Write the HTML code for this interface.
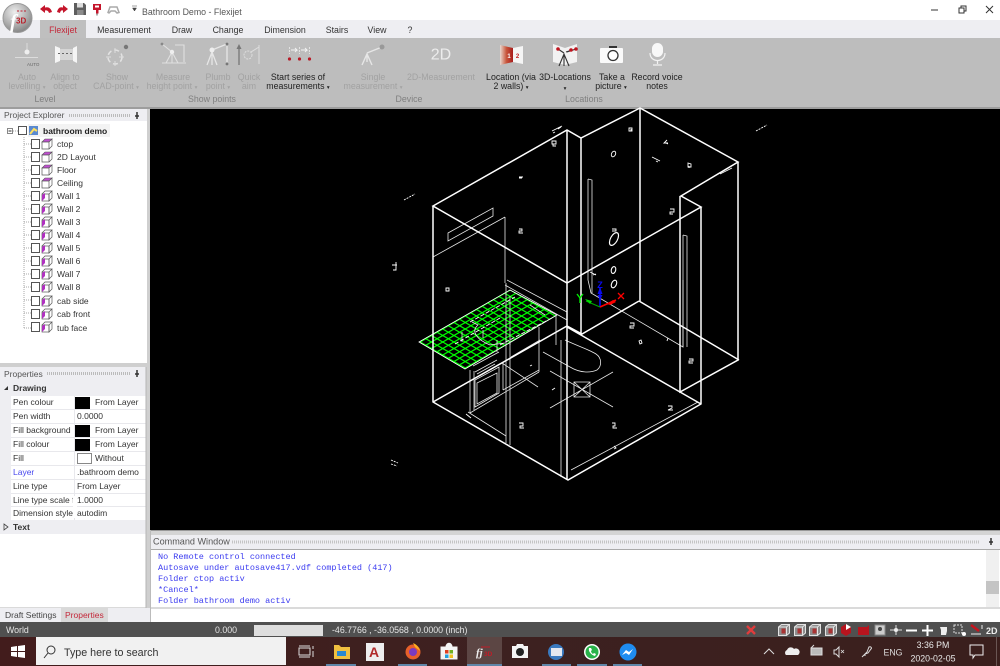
<!DOCTYPE html>
<html><head><meta charset="utf-8"><title>Bathroom Demo - Flexijet</title>
<style>
html,body{margin:0;padding:0;background:#fff;width:1000px;height:666px;overflow:hidden}
svg{display:block;font-family:"Liberation Sans",sans-serif;font-size:8.8px}
.t{fill:#333;font-size:8.5px}
.d{fill:#a2a2a2;text-anchor:middle}
.a{fill:#222;text-anchor:middle}
.g{fill:#808080;text-anchor:middle}
.m{font-family:"Liberation Mono",monospace;font-size:8.5px;fill:#3c3cf0}
.s{fill:#e6e6e6}
.w{stroke:#fff;stroke-width:1.5;fill:none}
.n{stroke:#e8e8e8;stroke-width:.8;fill:none}
.k{stroke:#fff;stroke-width:.8;fill:none}
tspan.c{font-size:5.5px}
</style></head><body>
<svg width="1000" height="666" viewBox="0 0 1000 666" xmlns="http://www.w3.org/2000/svg">
<defs>
<radialGradient id="lg" cx=".4" cy=".3" r=".8"><stop offset="0" stop-color="#eee"/><stop offset=".6" stop-color="#a9a9a9"/><stop offset="1" stop-color="#777"/></radialGradient>
<linearGradient id="tb" x1="0" x2="1" y1="0" y2="0"><stop offset="0" stop-color="#421c1c"/><stop offset=".5" stop-color="#3d2120"/><stop offset="1" stop-color="#3a1f1d"/></linearGradient>
<linearGradient id="rd" x1="0" x2="1" y1="0" y2="0"><stop offset="0" stop-color="#e8d8d0"/><stop offset=".5" stop-color="#c8553a"/><stop offset="1" stop-color="#a81c1c"/></linearGradient>
<pattern id="gr" width="6.500" height="6.500" patternUnits="userSpaceOnUse" patternTransform="matrix(.866 .5 .866 -.5 419 342)">
<rect width="6.500" height="6.500" fill="#000"/><path d="M0 .7H6.500M.7 0V6.500" stroke="#00ff00" stroke-width="1.400"/></pattern>
<g id="wi"><rect x="0" y="3" width="7" height="7" fill="#fff" stroke="#555" stroke-width=".7"/><path d="M0 3L3 0H10L7 3V10L10 7V0" fill="none" stroke="#555" stroke-width=".7"/><path d="M0 10L3 7V2L0 4Z" fill="#b030c0"/></g>
<g id="ti"><path d="M0 3L3 0H10L7 3Z" fill="#c050d0" stroke="#555" stroke-width=".6"/><path d="M0 3H7V10H0ZM7 3L10 0V7L7 10" fill="#fff" stroke="#555" stroke-width=".7"/></g>
<g id="cu"><path d="M-5.500 -3L-2.500 -5.500H5.500V3L2.500 5.500H-5.500Z" fill="#8e8e8e"/><path d="M-5.500 -3L-2.500 -5.500H5.500V3L2.500 5.500H-5.500ZM-5.500 -3H2.500V5.500M2.500 -3L5.500 -5.500" fill="none" stroke="#e2e2e2" stroke-width="1"/><rect x="-2.500" y="-1.500" width="4" height="5" fill="#a33"/></g>
</defs>

<!-- title -->
<rect width="1000" height="20" fill="#fff"/>
<rect y="20" width="1000" height="18" fill="#eeeef2"/>
<rect x="40" y="20" width="46" height="18" fill="#bfbfbf"/>
<rect y="38" width="1000" height="69" fill="#bdbdbd"/>
<rect y="107" width="1000" height="2" fill="#9d9d9d"/>

<circle cx="17.500" cy="18" r="14.500" fill="url(#lg)" stroke="#999"/>
<text x="10" y="28" style="font:italic bold 20px 'Liberation Serif',serif" fill="#fff">f</text>
<text x="16" y="23.500" style="font:bold 8px 'Liberation Sans',sans-serif" fill="#b8202a">3D</text>
<path d="M17 11h9" stroke="#c02030" stroke-width="1" stroke-dasharray="2 1.500"/>

<path d="M40 9l5-4v2.500c3-1 6 .5 7 4.500l-3 1c-.5-2-2-3-4-2.500v2.500z" fill="#c4152b"/>
<path d="M68 9l-5-4v2.500c-3-1-5 .5-6 4.500l3 1c.5-2 1-3 3-2.500v2.500z" fill="#c4152b"/>
<path d="M74 3h10l2 2v10H74z" fill="#5e5e5e"/><rect x="77" y="3" width="6" height="4.500" fill="#ddd"/><rect x="77" y="10" width="6.500" height="5" fill="#8c8c8c"/>
<rect x="93" y="4" width="8" height="6" fill="#c4152b"/><rect x="96" y="10" width="2.500" height="3.500" fill="#c4152b"/><path d="M97 13.500v2" stroke="#555"/><rect x="95" y="5.500" width="4" height="2" fill="#fff"/>
<path d="M108 12.500l2-5.500h7l2 5.500-2 .5-2-2h-4l-2 2z" fill="none" stroke="#aaa" stroke-width="1.500"/>
<path d="M132 6h5M132.500 8h4l-2 3z" fill="#444" stroke="#444" stroke-width=".5"/>
<text x="142" y="15" fill="#555">Bathroom Demo -  Flexijet</text>
<path d="M931 10h7" stroke="#333"/>
<path d="M959 8h5v5h-5zM961 8V6h5v5h-2" fill="none" stroke="#333"/>
<path d="M986 6l7 7M993 6l-7 7" stroke="#333"/>

<!-- tabs -->
<g text-anchor="middle" fill="#333">
<text x="63" y="33" fill="#c4283a">Flexijet</text>
<text x="124" y="33">Measurement</text>
<text x="182" y="33">Draw</text>
<text x="228" y="33">Change</text>
<text x="285" y="33">Dimension</text>
<text x="337" y="33">Stairs</text>
<text x="377" y="33">View</text>
<text x="410" y="33">?</text>
</g>

<!-- ribbon labels -->
<text class="d" x="27" y="80">Auto</text><text class="d" x="27" y="89">levelling <tspan class="c">▾</tspan></text>
<text class="d" x="65" y="80">Align to</text><text class="d" x="65" y="89">object</text>
<text class="d" x="117" y="80">Show</text><text class="d" x="116" y="89">CAD-point <tspan class="c">▾</tspan></text>
<text class="d" x="173" y="80">Measure</text><text class="d" x="172" y="89">height point <tspan class="c">▾</tspan></text>
<text class="d" x="218" y="80">Plumb</text><text class="d" x="218" y="89">point <tspan class="c">▾</tspan></text>
<text class="d" x="249" y="80">Quick</text><text class="d" x="249" y="89">aim</text>
<text class="a" x="298" y="80">Start series of</text><text class="a" x="298" y="89">measurements <tspan class="c">▾</tspan></text>
<text class="d" x="373" y="80">Single</text><text class="d" x="373" y="89">measurement <tspan class="c">▾</tspan></text>
<text class="d" x="441" y="80">2D-Measurement</text>
<text class="a" x="511" y="80">Location (via</text><text class="a" x="511" y="89">2 walls) <tspan class="c">▾</tspan></text>
<text class="a" x="565" y="80">3D-Locations</text><text class="a" x="565" y="90" style="font-size:5.500px">▾</text>
<text class="a" x="612" y="80">Take a</text><text class="a" x="611" y="89">picture <tspan class="c">▾</tspan></text>
<text class="a" x="657" y="80">Record voice</text><text class="a" x="657" y="89">notes</text>
<text class="g" x="45" y="102">Level</text><text class="g" x="212" y="102">Show points</text><text class="g" x="409" y="102">Device</text><text class="g" x="584" y="102">Locations</text>

<!-- ribbon icons -->
<path d="M15 57.500h23M27 43v9" stroke="#dcdcdc" stroke-width="1"/><circle cx="27" cy="52" r="2.500" fill="#eee"/>
<text x="27" y="66" style="font-size:4.500px" fill="#666">AUTO</text>
<path d="M55 46l5 2v13l-5 2zM77 46l-4 2v13l4 2z" fill="#f5f5f5"/><rect x="60" y="49" width="13" height="11" fill="#d6d6d6"/><path d="M58 53.500h16" stroke="#666" stroke-dasharray="2 2"/>
<circle cx="115" cy="57" r="7" fill="none" stroke="#e2e2e2" stroke-width="1.500" stroke-dasharray="5 3"/><path d="M106 57h5M119 57h5M115 48v5M115 61v5" stroke="#ddd"/><circle cx="126" cy="47" r="2.200" fill="#777"/>
<path d="M162 44l10 8M162 63h24M172 52l-6 11M172 52l6 11M172 52v11M175 45h9v17" stroke="#e0e0e0" stroke-width="1.100" fill="none"/><circle cx="162" cy="44" r="1.400" fill="#888"/><circle cx="172" cy="52" r="2.200" fill="#eee"/>
<path d="M207 65l5-13 5 13M212 52v13M212 50l15-6M227 46v16" stroke="#e6e6e6" stroke-width="1.300" fill="none"/><circle cx="212" cy="50" r="2.500" fill="#eee"/><circle cx="227" cy="44" r="1.400" fill="#777"/><circle cx="227" cy="64" r="1.400" fill="#777"/>
<path d="M239 65V46" stroke="#777" stroke-width="1.300"/><path d="M236.500 49l2.500-5 2.500 5z" fill="#777"/><circle cx="248" cy="55" r="4" fill="none" stroke="#ddd" stroke-dasharray="2 1"/><path d="M251 52l8-5M259 45v19" stroke="#ddd"/>
<path d="M289.500 47v7M299.500 47v7M309.500 47v7" stroke="#e2e2e2" stroke-width="1" stroke-dasharray="2 1"/><path d="M291 50h6l-2-2m2 2l-2 2M301 50h6l-2-2m2 2l-2 2" stroke="#f2f2f2" fill="none"/>
<circle cx="289.500" cy="59" r="1.600" fill="#b81c28"/><circle cx="299.500" cy="59" r="1.600" fill="#b81c28"/><circle cx="309.500" cy="59" r="1.600" fill="#b81c28"/>
<path d="M362 65l5-11 5 11M367 54v8M367 53l15-6" stroke="#e6e6e6" stroke-width="1.400" fill="none"/><circle cx="382" cy="47" r="2.500" fill="#999"/>
<text x="441" y="59.500" text-anchor="middle" style="font-size:16px" fill="#ececec">2D</text>
<path d="M500 45l13 3v14l-13 3z" fill="url(#rd)"/><path d="M513 48l10-2v18l-10-2z" fill="#f5f5f5"/>
<text x="509" y="58" style="font-size:6px;font-weight:bold" text-anchor="middle" fill="#fff">1</text><text x="517.500" y="58" style="font-size:6px;font-weight:bold" text-anchor="middle" fill="#c02020">2</text>
<path d="M553 44l12 4 12-4v18l-12 3-12-3z" fill="#f2f2f2"/><path d="M559 66l5-12 5 12M564 54v12M564 53l-6-4M566 52l6-2M567 52l9-3" stroke="#333" stroke-width="1.100" fill="none"/><circle cx="558" cy="49" r="1.800" fill="#c0141e"/><circle cx="571" cy="50" r="1.800" fill="#c0141e"/><circle cx="576" cy="49" r="1.800" fill="#c0141e"/>
<rect x="600" y="48" width="23" height="15" rx="1" fill="#fafafa"/><rect x="609" y="46" width="8" height="2" fill="#333"/><circle cx="613" cy="55.500" r="5" fill="#fff" stroke="#333" stroke-width="1.300"/>
<rect x="652" y="43" width="11" height="14" rx="5.500" fill="#f8f8f8"/><path d="M650 53c0 10 15 10 15 0M657.500 60v4M653 65h9" stroke="#f2f2f2" stroke-width="1.200" fill="none"/>

<!-- left panels -->
<rect y="109" width="150" height="513" fill="#cfcfcf"/>
<rect x="0" y="109" width="147" height="254" fill="#fff"/>
<rect x="0" y="109" width="147" height="12" fill="#eeeef2"/>
<text class="t" x="4" y="118" style="fill:#555">Project Explorer</text>
<path d="M69 115.500H130" stroke="#bbb" stroke-width="3" stroke-dasharray="1 1"/>
<path d="M137 112v4M135 116h4M137 116v3" stroke="#333" stroke-width="1.500"/>

<rect x="28" y="124" width="82" height="13" fill="#f3f3f3"/>
<path d="M24 137V328" stroke="#aaa" stroke-dasharray="1 1"/>
<path d="M24 144h7M24 157h7M24 170h7M24 183h7M24 196h7M24 209h7M24 222h7M24 235h7M24 248h7M24 261h7M24 274h7M24 287h7M24 300h7M24 313h7M24 328h7" stroke="#aaa" stroke-dasharray="1 1"/>
<rect x="7.500" y="128.500" width="5" height="5" fill="#fff" stroke="#888"/><path d="M8.500 131h3" stroke="#333"/><path d="M13 131h5" stroke="#aaa" stroke-dasharray="1 1"/>
<rect x="18.500" y="126.500" width="8" height="8" fill="#fff" stroke="#555"/>
<rect x="29" y="126" width="9" height="9" fill="#5a8ad0"/><path d="M30 134l4-5 3 2" stroke="#ffe060" stroke-width="2" fill="none"/>
<text x="43" y="134" style="font-weight:bold;font-size:8.500px" fill="#222">bathroom demo</text>

<g fill="#fff" stroke="#555">
<rect x="31.500" y="139.500" width="8" height="9"/><rect x="31.500" y="152.500" width="8" height="9"/><rect x="31.500" y="165.500" width="8" height="9"/><rect x="31.500" y="178.500" width="8" height="9"/><rect x="31.500" y="191.500" width="8" height="9"/><rect x="31.500" y="204.500" width="8" height="9"/><rect x="31.500" y="217.500" width="8" height="9"/><rect x="31.500" y="230.500" width="8" height="9"/><rect x="31.500" y="243.500" width="8" height="9"/><rect x="31.500" y="256.500" width="8" height="9"/><rect x="31.500" y="269.500" width="8" height="9"/><rect x="31.500" y="282.500" width="8" height="9"/><rect x="31.500" y="296.500" width="8" height="9"/><rect x="31.500" y="309.500" width="8" height="9"/><rect x="31.500" y="322.500" width="8" height="9"/>
</g>
<use href="#ti" x="42" y="139"/><use href="#ti" x="42" y="152"/><use href="#ti" x="42" y="165"/><use href="#ti" x="42" y="178"/>
<use href="#wi" x="42" y="191"/><use href="#wi" x="42" y="204"/><use href="#wi" x="42" y="217"/><use href="#wi" x="42" y="230"/><use href="#wi" x="42" y="243"/><use href="#wi" x="42" y="256"/><use href="#wi" x="42" y="269"/><use href="#wi" x="42" y="282"/><use href="#wi" x="42" y="296"/><use href="#wi" x="42" y="309"/><use href="#wi" x="42" y="322"/>
<g class="t">
<text x="57" y="147">ctop</text><text x="57" y="160">2D Layout</text><text x="57" y="173">Floor</text><text x="57" y="186">Ceiling</text><text x="57" y="199">Wall 1</text><text x="57" y="212">Wall 2</text><text x="57" y="225">Wall 3</text><text x="57" y="238">Wall 4</text><text x="57" y="251">Wall 5</text><text x="57" y="264">Wall 6</text><text x="57" y="277">Wall 7</text><text x="57" y="290">Wall 8</text><text x="57" y="304">cab side</text><text x="57" y="317">cab front</text><text x="57" y="331">tub face</text>
</g>

<!-- properties -->
<rect x="0" y="367" width="146" height="241" fill="#fff"/>
<rect x="0" y="367" width="146" height="13" fill="#eeeef2"/>
<text class="t" x="4" y="377" style="fill:#555">Properties</text>
<path d="M47 373.500H130" stroke="#bbb" stroke-width="3" stroke-dasharray="1 1"/>
<path d="M137 370v4M135 374h4M137 374v3" stroke="#333" stroke-width="1.500"/>
<rect x="0" y="380" width="146" height="16" fill="#eeeef2"/>
<rect x="0" y="520" width="146" height="14" fill="#eeeef2"/>
<rect x="0" y="396" width="11" height="124" fill="#eeeef2"/>
<path d="M11 409.500H146M11 423.500H146M11 437.500H146M11 451.500H146M11 465.500H146M11 479.500H146M11 493.500H146M11 506.500H146M74.500 396V520" stroke="#e8e8ec"/>
<path d="M4 390l4 0v-4z" fill="#333"/><path d="M4 524l4 3-4 3z" fill="none" stroke="#444" stroke-width=".8"/>
<text x="13" y="391" style="font-weight:bold;font-size:8.500px" fill="#333">Drawing</text>
<text x="13" y="530" style="font-weight:bold;font-size:8.500px" fill="#333">Text</text>
<g class="t"><text x="13" y="405">Pen colour</text><text x="13" y="419">Pen width</text><text x="13" y="433">Fill background</text><text x="13" y="447">Fill colour</text><text x="13" y="461">Fill</text><text x="13" y="475" style="fill:#4848ee">Layer</text><text x="13" y="489">Line type</text><text x="13" y="503">Line type scale f</text><text x="13" y="516">Dimension style</text>
<rect x="73" y="496" width="4" height="22" fill="#fff"/>
<text x="95" y="405">From Layer</text><text x="77" y="419">0.0000</text><text x="95" y="433">From Layer</text><text x="95" y="447">From Layer</text><text x="95" y="461">Without</text><text x="77" y="475">.bathroom demo</text><text x="77" y="489">From Layer</text><text x="77" y="503">1.0000</text><text x="77" y="516">autodim</text></g>
<rect x="75" y="397" width="15" height="12" fill="#000"/><rect x="75" y="425" width="15" height="12" fill="#000"/><rect x="75" y="439" width="15" height="12" fill="#000"/>
<rect x="77.500" y="453.500" width="14" height="10" fill="#fff" stroke="#888"/>
<path d="M0 608H146V367" stroke="#b5b5b5" fill="none"/>
<rect x="0" y="608" width="150" height="14" fill="#eeeef2"/>
<rect x="61" y="608" width="47" height="14" fill="#d9d9d9"/>
<text class="t" x="5" y="618" style="fill:#444">Draft Settings</text><text class="t" x="65" y="618" style="fill:#c4283a">Properties</text>

<!-- CAD canvas -->
<rect x="150" y="109" width="850" height="421" fill="#000"/>
<polygon points="419,342 510,290 557,315 465,369" fill="url(#gr)"/>
<path class="k" d="M419 342L510 290L557 315L465 369Z"/>
<g class="n">
<path d="M448 233L493 208V216L448 241Z"/>
<path d="M505 217L433 257M505 217V283M506 283V443M510 343V445"/>
<path d="M588 179L592 180V293M588 179V280L591 293L683 347V280M680 280V391"/>
<path d="M683 235L687 236V347M683 235V347"/>
<path d="M561 340V477M571 470L698 402"/>
<path d="M543 352L570 367C580 373 590 373 597 370C602 366 602 358 596 354C590 350 580 347 565 340"/>
<path d="M574 382H590V397H574ZM574 382L590 397M590 382L574 397M550 371L613 407M550 408L613 372"/>
<path d="M507 280L567 312M505 285L567 320M556 315L556 345M470 370V413M539 327V372M470 413L539 372M474 371V410M475 380L499 367V393L475 407ZM477 383L497 373V393L477 404Z"/>
<path d="M468 412L506 436M473 366L499 352M477 374L495 364M475 372L497 360M502 363L538 387M503 390L539 370M503 362V390M511 357L540 340"/>
<path d="M510 296V345M472 322L478 325C470 332 478 340 490 345L505 343M483 330V338M462 332V342M497 340V352M530 305L545 315"/>
</g>
<path d="M455 344L500 318M470 322L515 297M500 345L552 318" stroke="#fff" stroke-width=".9" stroke-dasharray="4 2" fill="none"/>
<g class="w">
<path d="M433 206L567 130L581 138L640 108L738 162L681 196L701 207L567 283Z"/>
<path d="M433 206V402L568 480L701 404V207M567 130V480M581 138V334M640 108V301M738 162V360L680 392V196M680 392L701 404"/>
<path d="M639 301L739 360M639 301L582 334L567 326L433 402M567 327L680 392"/>
</g>
<!-- small marks -->
<g stroke="#fff" stroke-width=".9" fill="none">
<path d="M552 131l10-5M553 133l2-1M558 129l3-2"/>
<path d="M552 141h4v3h-4zM553 144v2h3"/><path d="M629 128h3v3h-3zM631 131v-2"/>
<ellipse cx="613.500" cy="154" rx="2" ry="3" transform="rotate(25 613.500 154)"/>
<path d="M667 140l-3 3h4M668 144l-2-1"/><path d="M652 157l8 4M656 161l2 1"/><path d="M688 163l3 1v3h-3zM689 166v2"/>
<path d="M720 174l12-6"/><path d="M756 131l11-6" stroke-dasharray="2 1"/><path d="M404 200l11-6" stroke-dasharray="2 1"/>
<path d="M519 177h4M519 178h3"/><path d="M519 229h3v2h-3v2h4"/><path d="M670 209h4v3h-4v2h3"/>
<ellipse cx="614" cy="239" rx="3.500" ry="7" transform="rotate(28 614 239)" stroke-width="1.200"/><path d="M612 229h4v2h-4"/>
<ellipse cx="613.500" cy="270" rx="2.200" ry="3.500" transform="rotate(15 613.500 270)" stroke-width="1.100"/>
<ellipse cx="614" cy="284" rx="2.400" ry="4" transform="rotate(25 614 284)" stroke-width="1.100"/>
<path d="M396 262v8h-3M392 265h5"/><path d="M590 272l6 3M593 275l3-1"/>
<path d="M446 288h3v3h-3z"/><path d="M630 323h4v3h-4v2h4"/><path d="M639 341l2-1 1 3-2 1z"/>
<path d="M689 359h4v2h-4v2h4"/><path d="M668 406h4v2l-4 2h5"/><path d="M519 423h4v3h-3v2h4"/><path d="M612 423h3v3h-2v2h4"/>
<path d="M391 460l7 3M391 464l6 2" stroke-dasharray="2 1"/><path d="M552 390l3-2M532 365l-2 1M668 338l-1 3"/><path d="M614 446l2 2-2 1"/>
<path d="M466 414l5 4"/>
</g>
<!-- axes -->
<path d="M600 307V288" stroke="#0a0af0" stroke-width="1.600"/><path d="M597.500 294l2.500-7 2.500 7zM597.500 295l2.500 5 2.500-5z" fill="#0a0af0"/>
<text x="600" y="288" text-anchor="middle" style="font-size:9px;font-weight:bold" fill="#0a0af0">Z</text>
<path d="M600 307L616 300" stroke="#f00" stroke-width="1.600"/><path d="M607 304l6-4 3 2-6 3z" fill="#f00"/><path d="M618 293l6 6M624 293l-6 6" stroke="#f00" stroke-width="1.300"/>
<path d="M600 307L586 301" stroke="#0a0" stroke-width="1"/><path d="M585 299l7 2-2 3z" fill="#0d0"/><path d="M577 294l3 4 3-4M580 298v5" stroke="#0e0" stroke-width="1.400" fill="none"/>

<!-- command window -->
<rect x="150" y="530" width="850" height="92" fill="#fff"/>
<rect x="150" y="530" width="850" height="5" fill="#d4d4d4"/><rect x="150" y="530" width="850" height="1" fill="#999"/>
<rect x="150" y="535" width="850" height="14" fill="#eeeef2"/><rect x="150" y="549" width="850" height="1" fill="#aaa"/>
<text x="153" y="544.500" style="font-size:9.100px" fill="#555">Command Window</text>
<path d="M232 542H980" stroke="#c4c4c4" stroke-width="3" stroke-dasharray="1 1"/>
<path d="M991 538v4M989 542h4M991 542v3" stroke="#333" stroke-width="1.500"/>
<text class="m" x="158" y="559">No Remote control connected</text>
<text class="m" x="158" y="570">Autosave under autosave417.vdf completed (417)</text>
<text class="m" x="158" y="581">Folder ctop activ</text>
<text class="m" x="158" y="592">*Cancel*</text>
<text class="m" x="158" y="603">Folder bathroom demo activ</text>
<rect x="986" y="550" width="13" height="57" fill="#f0f0f0"/><rect x="986" y="581" width="13" height="13" fill="#c4c4c4"/>
<path d="M150 608H1000" stroke="#b5b5b5"/>
<path d="M150.500 530V622" stroke="#bbb"/>

<!-- status -->
<rect y="622" width="1000" height="15" fill="#505050"/>
<text class="s" x="6" y="633">World</text>
<text class="s" x="215" y="633">0.000</text>
<rect x="254" y="625" width="69" height="11" fill="#dedede"/>
<text class="s" x="332" y="633">-46.7766 , -36.0568 , 0.0000 (inch)</text>
<path d="M747 626l8 8M755 626l-8 8" stroke="#e03c3c" stroke-width="2.400"/>
<use href="#cu" x="784" y="630"/><use href="#cu" x="800" y="630"/><use href="#cu" x="815" y="630"/><use href="#cu" x="831" y="630"/>
<path d="M841 627l5-3 5 3v6l-5 3-5-3z" fill="#b8141e"/><path d="M846 624l5 3-5 3z" fill="#fff"/>
<path d="M858 627h9l2-2v10h-11z" fill="#b8141e"/>
<rect x="875" y="625" width="10" height="10" fill="#ccc" stroke="#888"/><circle cx="880" cy="629" r="2" fill="#444"/>
<path d="M890 630h4M898 630h4M896 625v3M896 632v3" stroke="#ddd"/><circle cx="896" cy="630" r="2" fill="#eee"/>
<path d="M906 630.500h11" stroke="#fff" stroke-width="2"/><path d="M922 630.500h11M927.500 625v11" stroke="#fff" stroke-width="2"/>
<path d="M941 635v-5l-1-3h7v4l-1 4z" fill="#eee"/>
<path d="M954 625h8v8h-8z" fill="none" stroke="#ddd" stroke-dasharray="2 1"/><circle cx="964" cy="634" r="2" fill="#fff"/>
<path d="M971 625l8 6" stroke="#c8141e" stroke-width="2.400"/><path d="M971 634h10M982 625v4" stroke="#eee"/>
<text x="986" y="634" style="font-size:9px;font-weight:bold" fill="#eee">2D</text>

<!-- taskbar -->
<rect y="637" width="1000" height="29" fill="url(#tb)"/>
<path d="M11 647l6-1v5h-6zM18 646l7-1v6h-7zM11 652h6v5l-6-1zM18 652h7v6l-7-1z" fill="#fff"/>
<rect x="36" y="637" width="250" height="28" fill="#f1f1f1"/>
<circle cx="51" cy="650" r="4" fill="none" stroke="#333"/><path d="M48 653l-4 5" stroke="#333"/>
<text x="64" y="656" style="font-size:10.700px" fill="#333">Type here to search</text>
<path d="M299 648h11v7h-11zM299 646h11M299 657h11M313 646v3M313 651v6" stroke="#ddd" fill="none"/>
<path d="M334 645h5l2 2h9v12h-16z" fill="#f0c040"/><rect x="337" y="651" width="9" height="5" fill="#2a88d0"/>
<rect x="366" y="643" width="18" height="18" fill="#eee"/><text x="374" y="657" text-anchor="middle" style="font-size:14px;font-weight:bold" fill="#b02a2a">A</text>
<circle cx="413" cy="652" r="7.500" fill="#e8602a"/><circle cx="413" cy="652" r="4" fill="#7a3ac0"/><path d="M413 643c3 1 6 4 7 8l-5-4z" fill="#ffb020"/>
<path d="M441 647h16v12h-16zM446 647c0-5 6-5 6 0" fill="#f4f4f4" stroke="#f4f4f4"/><rect x="445" y="650" width="3.500" height="3.500" fill="#e04020"/><rect x="449.500" y="650" width="3.500" height="3.500" fill="#70b020"/><rect x="445" y="654.500" width="3.500" height="3.500" fill="#20a0e0"/><rect x="449.500" y="654.500" width="3.500" height="3.500" fill="#f0c020"/>
<rect x="467" y="637" width="35" height="29" fill="#5c4644"/>
<text x="476" y="656" style="font:italic bold 11px 'Liberation Serif',serif" fill="#eee">fj</text><text x="484" y="656" style="font-size:6.500px;font-weight:bold" fill="#c01c28">3D</text><path d="M481 647h9" stroke="#c01c28"/>
<path d="M512 646h4l1-2h6l1 2h4v12h-16z" fill="#f4f4f4"/><circle cx="520" cy="652" r="4" fill="#222"/>
<circle cx="556" cy="652" r="8" fill="#3a7ac0"/><rect x="551" y="648" width="11" height="8" fill="#e4e8f0"/>
<circle cx="592" cy="652" r="8" fill="#fff"/><circle cx="592" cy="652" r="6.500" fill="#29b34a"/><path d="M589 648c-1 3 2 7 6 8l1-2-2-1-1 1c-1-.5-2-2-2-3l1-1-1-2z" fill="#fff"/>
<circle cx="628" cy="652" r="8.500" fill="#1f8cf0"/><path d="M622 655l4-5 3 2 4-3-4 6-3-2z" fill="#fff"/>
<g fill="#5f86a8"><rect x="326" y="664" width="30" height="2"/><rect x="398" y="664" width="29" height="2"/><rect x="467" y="664" width="35" height="2"/><rect x="542" y="664" width="29" height="2"/><rect x="577" y="664" width="30" height="2"/><rect x="613" y="664" width="29" height="2"/></g>
<!-- tray -->
<path d="M764 654l5-5 5 5" stroke="#ddd" fill="none"/>
<path d="M786 655a3 3 0 0 1 1-5a4 4 0 0 1 7-1a3 3 0 0 1 4 6z" fill="#eee"/>
<rect x="811" y="648" width="11" height="7" fill="#bbb" stroke="#ddd"/><path d="M814 645l-3 3" stroke="#ddd"/>
<path d="M834 650h2l3-3v10l-3-3h-2z" fill="none" stroke="#ddd"/><path d="M841 650l3 3M844 650l-3 3" stroke="#ddd" stroke-width=".8"/>
<path d="M862 657l5-5 2-5c2-1 3 1 2 2l-3 4-3 1 0 2" stroke="#ddd" fill="none"/>
<text x="893" y="655.500" text-anchor="middle" fill="#ddd">ENG</text>
<text x="933" y="648" text-anchor="middle" fill="#e8e8e8">3:36 PM</text>
<text x="933" y="661.500" text-anchor="middle" fill="#e8e8e8">2020-02-05</text>
<path d="M970 645h13v10h-8l-2 3v-3h-3z" fill="none" stroke="#eee"/>
<path d="M996.500 637V666" stroke="#6a5654"/>
</svg>
</body></html>
